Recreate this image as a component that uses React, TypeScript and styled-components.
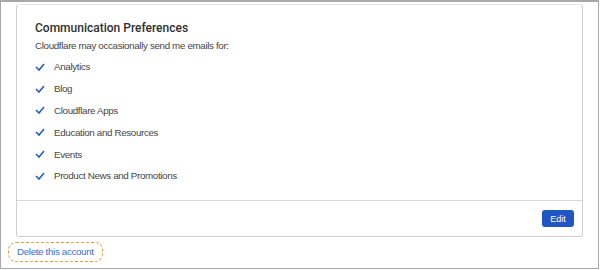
import React from 'react'
import styled, { createGlobalStyle } from 'styled-components'

const GlobalStyle = createGlobalStyle`
  body {
    margin: 0;
    background: #ffffff;
    font-family: "Liberation Sans", Arial, sans-serif;
    letter-spacing: -0.35px;
  }
`

const Frame = styled.div`
  box-sizing: border-box;
  width: 599px;
  height: 269px;
  border: 1px solid #a8a8a8;
  border-top-width: 2px;
  padding: 2px 15px 0 15px;
  display: flex;
  flex-direction: column;
  align-items: flex-start;
`

const Card = styled.section`
  box-sizing: border-box;
  width: 567px;
  height: 233px;
  border: 1px solid #cfcfcf;
  border-top-color: #e6e6e6;
  border-radius: 3px;
  display: flex;
  flex-direction: column;
`

const Body = styled.div`
  flex: 1;
  padding: 15px 18px 0 18px;
`

const Title = styled.h2`
  margin: 0;
  font-family: Roboto, "Liberation Sans", sans-serif;
  font-size: 12px;
  font-weight: 500;
  letter-spacing: 0;
  color: #2f2f2f;
  line-height: 16px;
`

const Lead = styled.p`
  margin: 3px 0 0 0;
  font-size: 9.8px;
  color: #464646;
  line-height: 14px;
`

const List = styled.ul`
  list-style: none;
  margin: 3px 0 0 0;
  padding: 0;
`

const Item = styled.li`
  display: flex;
  align-items: center;
  height: 21.8px;
  font-size: 9.8px;
  color: #464646;
`

const Check = styled.svg`
  width: 10px;
  height: 10px;
  margin-right: 9px;
  flex: none;
`

const Footer = styled.div`
  height: 35px;
  border-top: 1px solid #d6d6d6;
  display: flex;
  align-items: center;
  justify-content: flex-end;
  padding-right: 8px;
`

const Button = styled.button`
  background: #1f56c3;
  color: #ffffff;
  border: none;
  border-radius: 3px;
  font-family: inherit;
  font-size: 9px;
  letter-spacing: 0;
  width: 32px;
  height: 17px;
  padding: 0;
  cursor: pointer;
`

const DeleteLink = styled.a`
  margin: 5px 0 0 -8px;
  padding: 3px 8px;
  border: 1px dashed #f39a3c;
  border-radius: 8px;
  color: #3b6fd6;
  font-size: 9.8px;
  line-height: 12px;
  text-decoration: none;
  cursor: pointer;
`

const topics = [
  'Analytics',
  'Blog',
  'Cloudflare Apps',
  'Education and Resources',
  'Events',
  'Product News and Promotions',
]

function CheckIcon() {
  return (
    <Check viewBox="0 0 10 10">
      <polyline points="1,5 4,8 9,2" fill="none" stroke="#2a5fc6" strokeWidth="1.7" />
    </Check>
  )
}

function App() {
  return (
    <>
      <GlobalStyle />
      <Frame>
        <Card>
          <Body>
            <Title>Communication Preferences</Title>
            <Lead>Cloudflare may occasionally send me emails for:</Lead>
            <List>
              {topics.map(t => (
                <Item key={t}>
                  <CheckIcon />
                  {t}
                </Item>
              ))}
            </List>
          </Body>
          <Footer>
            <Button>Edit</Button>
          </Footer>
        </Card>
        <DeleteLink>Delete this account</DeleteLink>
      </Frame>
    </>
  )
}

export default App
